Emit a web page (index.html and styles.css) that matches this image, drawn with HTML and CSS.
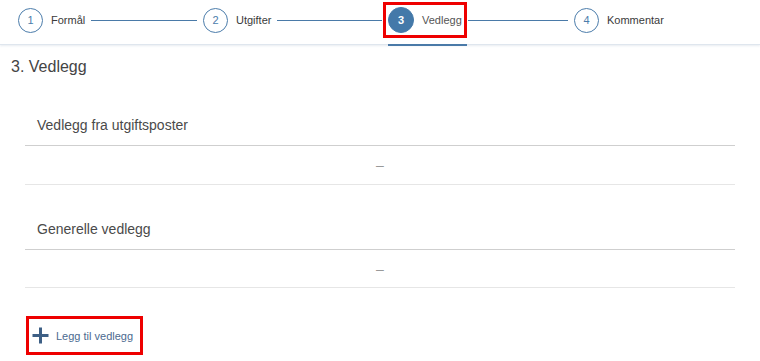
FILE: index.html
```html
<!DOCTYPE html>
<html lang="no">
<head>
<meta charset="utf-8">
<title>Vedlegg</title>
<link rel="stylesheet" href="styles.css">
</head>
<body>
<header class="stepper">
  <div class="step">
    <div class="step-main"><span class="circle">1</span><span class="label">Formål</span></div>
    <span class="connector"></span>
  </div>
  <div class="step">
    <div class="step-main"><span class="circle">2</span><span class="label">Utgifter</span></div>
    <span class="connector"></span>
  </div>
  <div class="step active">
    <div class="step-main"><span class="circle">3</span><span class="label">Vedlegg</span></div>
    <span class="connector"></span>
  </div>
  <div class="step">
    <div class="step-main"><span class="circle">4</span><span class="label">Kommentar</span></div>
  </div>
</header>
<main class="page">
  <h1 class="page-title">3. Vedlegg</h1>
  <section class="group">
    <h2 class="group-title">Vedlegg fra utgiftsposter</h2>
    <div class="group-row">–</div>
  </section>
  <section class="group group-second">
    <h2 class="group-title">Generelle vedlegg</h2>
    <div class="group-row">–</div>
  </section>
  <button class="add-btn" type="button">
    <svg class="plus" width="17" height="17" viewBox="0 0 17 17" aria-hidden="true"><path d="M8.5 0.5v16M0.5 8.5h16" stroke="currentColor" stroke-width="3" fill="none"/></svg>
    <span>Legg til vedlegg</span>
  </button>
</main>
</body>
</html>
```

FILE: styles.css
```css
* { box-sizing: border-box; }
body {
  margin: 0;
  background: #fff;
  font-family: "Liberation Sans", Arial, sans-serif;
  color: #333;
}
.stepper {
  height: 45px;
  display: grid;
  grid-template-columns: 185px 185px 186px auto;
  align-items: start;
  padding: 7px 0 0 18px;
  border-bottom: 1px solid #dfe6ee;
  box-shadow: 0 1px 2px rgba(120, 150, 180, 0.18);
}
.step {
  display: flex;
  align-items: center;
  height: 26px;
}
.step-main {
  display: flex;
  align-items: center;
  position: relative;
}
.circle {
  width: 25px;
  height: 25px;
  border: 1px solid #4c7dab;
  border-radius: 50%;
  display: flex;
  align-items: center;
  justify-content: center;
  font-size: 11px;
  color: #4c7dab;
  background: #fff;
}
.label {
  margin-left: 8px;
  font-size: 11px;
  color: #3a3a3a;
}
.connector {
  flex: 1;
  height: 1px;
  margin: 0 6px;
  background: #4a7aa8;
}
.step.active .circle {
  width: 26px;
  height: 26px;
  background: #4479a9;
  border-color: #4479a9;
  color: #fff;
  font-weight: bold;
}
.step.active .label { color: #555; }
.step.active .step-main {
  outline: 3px solid #ee0000;
  outline-offset: 2px;
}
.step.active .step-main::after {
  content: "";
  position: absolute;
  left: 0;
  width: 79px;
  bottom: -13px;
  height: 2px;
  background: #4a7aa8;
}
.page {
  padding: 0 25px 0 11px;
}
.page-title {
  margin: 12px 0 0;
  font-size: 16px;
  line-height: 20px;
  font-weight: normal;
  color: #444;
}
.group {
  margin: 38px 0 0 14px;
}
.group-second { margin-top: 34px; }
.group-title {
  margin: 0;
  padding: 0 12px 10px;
  font-size: 14px;
  line-height: 20px;
  font-weight: normal;
  color: #4a4a4a;
  border-bottom: 1px solid #cfcfcf;
}
.group-row {
  height: 39px;
  display: flex;
  align-items: center;
  justify-content: center;
  font-size: 14px;
  color: #999;
  border-bottom: 1px solid #e6e6e6;
}
.group-second .group-row { height: 38px; }
.add-btn {
  margin: 28px 0 0 15px;
  display: inline-flex;
  align-items: center;
  gap: 7px;
  height: 39px;
  padding: 0 7px 0 3px;
  border: 3px solid #ee0000;
  background: #fff;
  font-family: inherit;
  font-size: 11px;
  color: #4b6a8f;
  cursor: pointer;
}
.plus { color: #3d5f85; display: block; }
```
